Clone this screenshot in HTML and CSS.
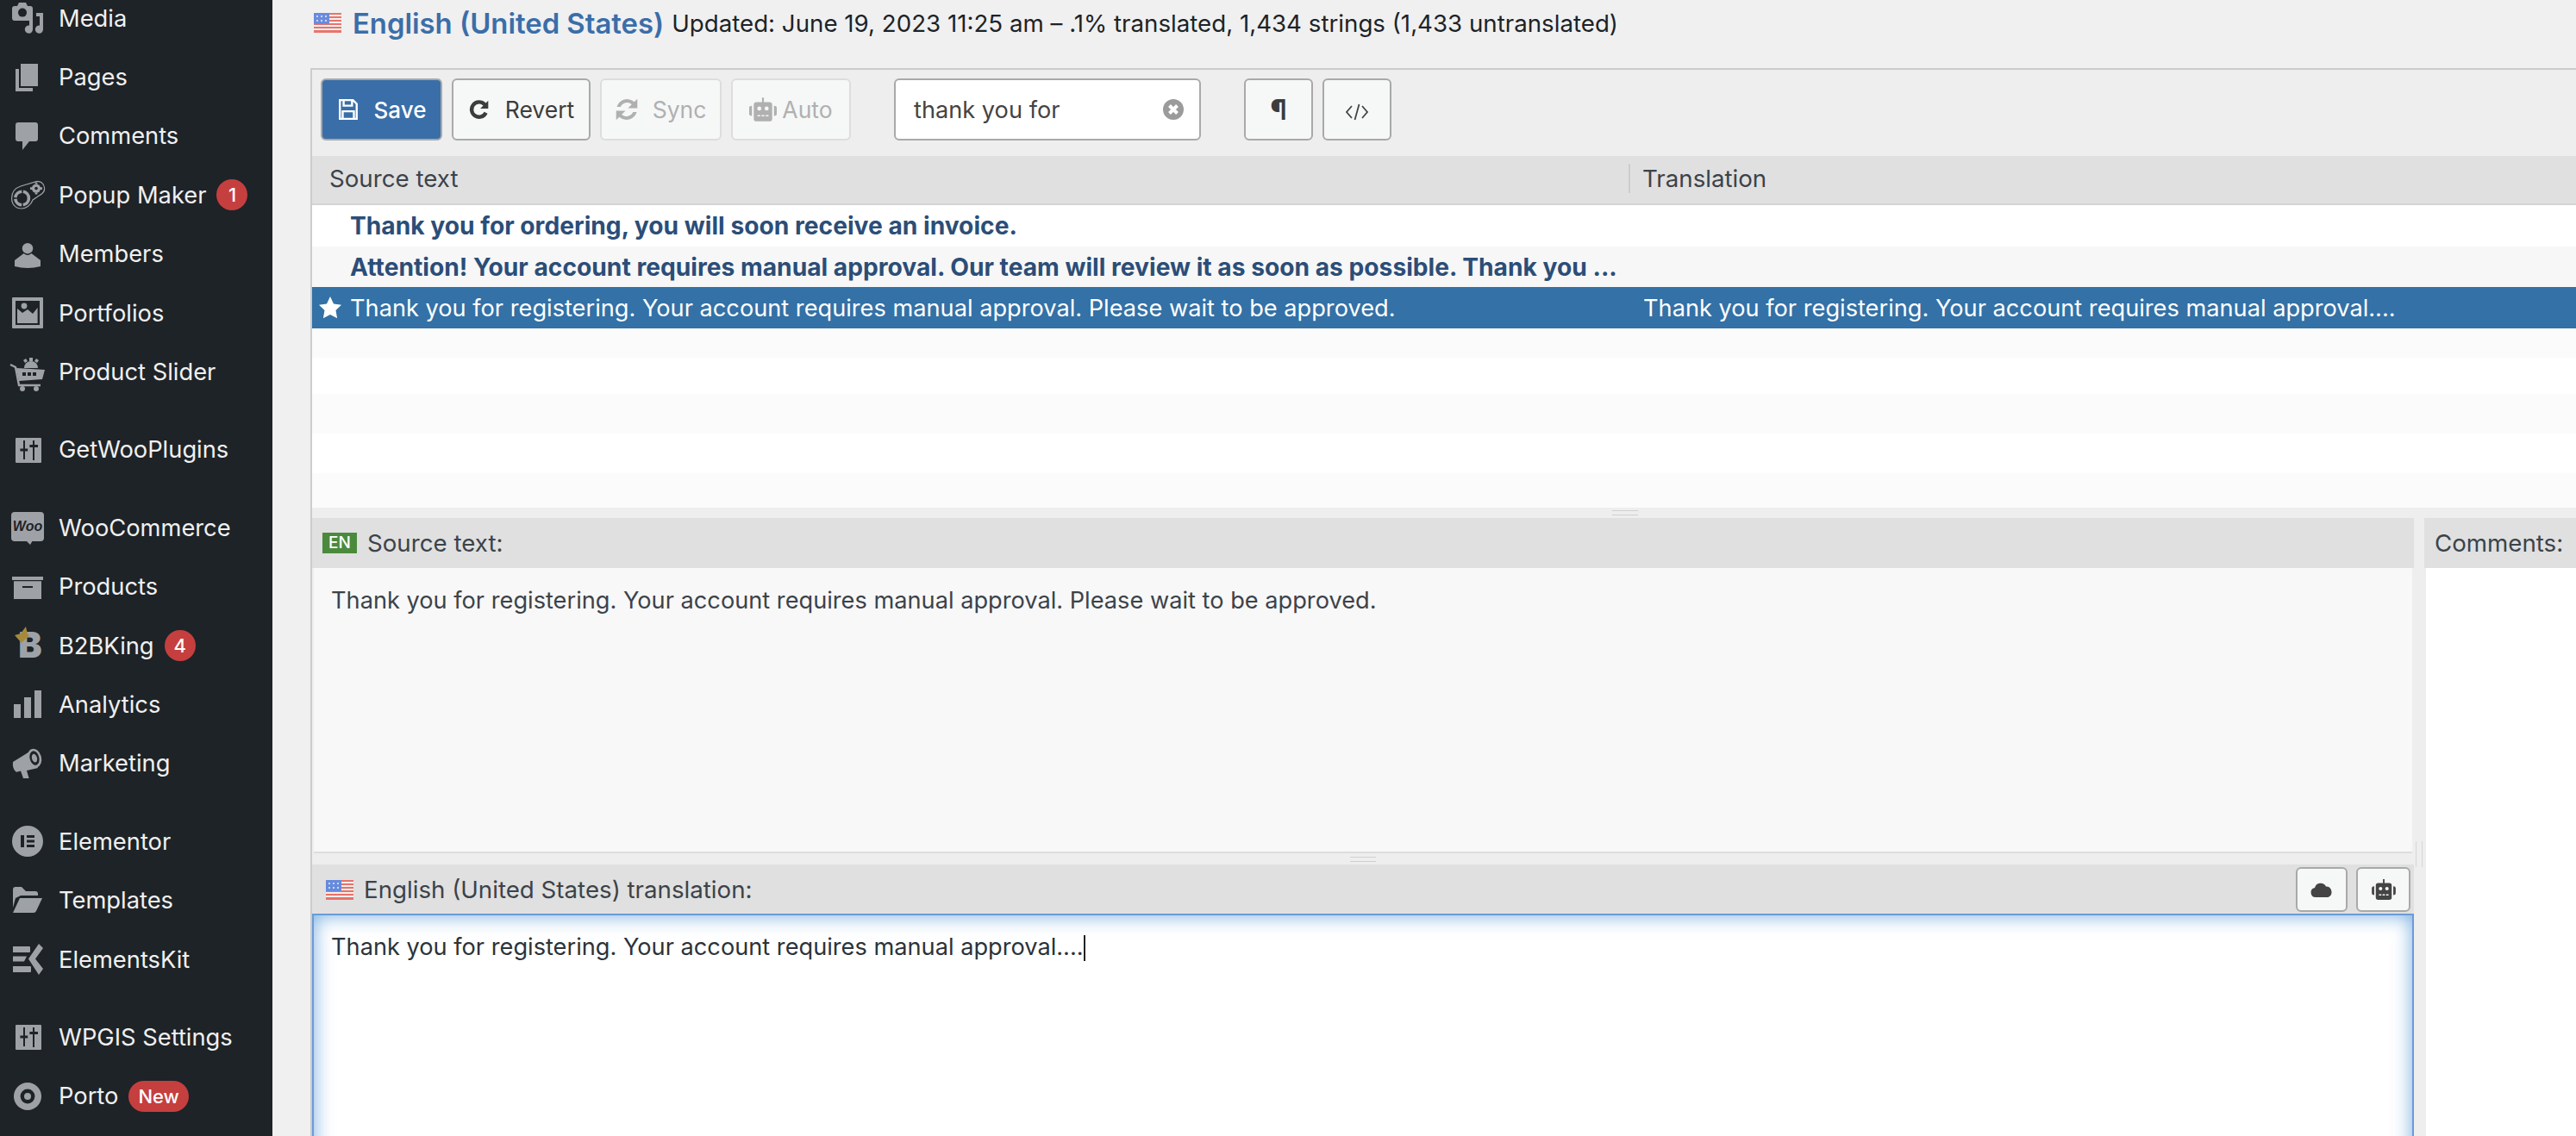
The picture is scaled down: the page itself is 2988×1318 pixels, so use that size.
FILE: index.html
```html
<!DOCTYPE html>
<html lang="en">
<head>
<meta charset="utf-8">
<title>Loco Translate editor</title>
<link rel="stylesheet" href="styles.css">
</head>
<body>
<aside class="sidebar">
  <ul class="menu">
    <li class="item"><svg class="ic" viewBox="0 0 20 20"><path d="M1 4.500Q1 3 2.500 3H4l1-2h4l1 2h1.500Q13 3 13 4.500V10q0 1.500-1.500 1.500h-9Q1 11.500 1 10z"/><circle class="cut" cx="7" cy="6.800" r="2.500"/><path d="M15 7h4v9.500a2.300 2.300 0 1 1-2-2.200V9h-2z"/><path d="M12 10.500h1V16.500a2.300 2.300 0 1 1-2-2.200V11z"/></svg><span>Media</span></li>
    <li class="item"><svg class="ic" viewBox="0 0 20 20"><path d="M6 2h10v13H6z"/><path d="M3 5h2v11h8v2H3z"/></svg><span>Pages</span></li>
    <li class="item"><svg class="ic" viewBox="0 0 20 20"><path d="M4.500 2h10Q16 2 16 3.500v8Q16 13 14.500 13H11l-4 5v-5H4.500Q3 13 3 11.500v-8Q3 2 4.500 2z"/></svg><span>Comments</span></li>
    <li class="item"><svg class="ic" viewBox="0 0 20 20"><path class="ln" d="M.8 12C.8 8 3 6 6 5L15 2.300C17.500 1.800 19.500 3.500 19.800 6 20 8 18.500 9.500 17 10.300L13 13C12 16 9 18 6.500 18 3 18 .8 15.500.8 12z"/><circle class="ln2" cx="6.800" cy="12" r="3.900" stroke-dasharray="5.500 .8"/><circle cx="15" cy="6.300" r="2.600"/><circle class="cut" cx="15" cy="6.300" r=".9"/><path d="M14.300 2.800h1.400v1h-1.400zM14.300 8.800h1.400v1h-1.400zM11.500 5.600h1v1.400h-1zM17.500 5.600h1v1.400h-1z"/></svg><span>Popup Maker</span><b class="badge">1</b></li>
    <li class="item"><svg class="ic" viewBox="0 0 20 20"><circle cx="10" cy="6.600" r="3.100"/><path d="M7.800 9.500 2.500 13.500V17q7.500 2 15 0v-3.500l-5.300-4q-2.200 2-4.400 0z"/></svg><span>Members</span></li>
    <li class="item"><svg class="ic" viewBox="0 0 20 20"><path fill-rule="evenodd" d="M1.500 1h17q.5 0 .5.500v17q0 .5-.5.500h-17q-.5 0-.5-.5v-17q0-.5.500-.5zM3 3v14h14V3z"/><path d="M4 7.500l3 2.500 3-2 3 2.500 2.800-3.500V16H4z"/><circle cx="8" cy="6" r="1.700"/></svg><span>Portfolios</span></li>
    <li class="item"><svg class="ic" viewBox="0 0 20 20"><path class="ln3" d="M0 5.500 3 7l2 10.500h12.500"/><path d="M3.500 7.500 20 8.500 18.500 14 5 15z"/><path class="cut" d="M7 10h2v2H7zM10 10h2v2h-2zM13 10h2v2h-2z"/><path d="M8 7.500a3.800 3.800 0 0 1 8 0z"/><path d="M11 1.500h2v2h-2zM7.500 3l1.500-1 1 1.500-1.500 1zM15 2l1.500 1-1 1.500L14 3.500z"/><circle cx="7" cy="19.500" r="1.500"/><circle cx="15" cy="19.500" r="1.500"/></svg><span>Product Slider</span></li>
    <li class="item sep"><svg class="ic" viewBox="0 0 20 20"><path d="M3.500 3h14q.5 0 .5.500v13.500q0 .5-.5.500h-14q-.5 0-.5-.5V3.500q0-.5.500-.5z"/><path class="cut" d="M7.500 4.500h1v4.800h1.600v1.500H8.500v4.700h-1v-4.700H5.700V9.300h1.800zM13 4.500h1v2.500h2v1.500h-2v7.500h-1V8.500h-1.800V7H13z"/></svg><span>GetWooPlugins</span></li>
    <li class="item sep"><svg class="ic" viewBox="0 0 20 20"><rect x=".5" y="1" width="19" height="17" rx="2"/><path d="M9 17.500h4l-1.500 2.500z"/><text class="woo" x="10" y="12" text-anchor="middle">Woo</text></svg><span>WooCommerce</span></li>
    <li class="item"><svg class="ic" viewBox="0 0 20 20"><path d="M1 4h18v2H1z"/><path fill-rule="evenodd" d="M2 6.600h16V17H2zM7 9.500v1h6v-1z"/></svg><span>Products</span></li>
    <li class="item"><svg class="ic" viewBox="0 0 20 20"><text class="bee" x="11.500" y="17" text-anchor="middle">B</text><path class="crown" d="M2.500 4 6 3 9-1l1 4.500 1 .5-4.500 4.500z"/></svg><span>B2BKing</span><b class="badge">4</b></li>
    <li class="item"><svg class="ic" viewBox="0 0 20 20"><path d="M2 10h4v8H2zM8 6h4v12H8zM14 2h4v16h-4z"/></svg><span>Analytics</span></li>
    <li class="item"><svg class="ic" viewBox="0 0 20 20"><path d="M1.500 9 12 2.500l4 10-6.500 1.500 1.300 4.500H7.500L6 14.300l-2.500.6Q1 13 1.500 9z"/><ellipse cx="14" cy="6.800" rx="4" ry="5.500" transform="rotate(-15 14 6.800)"/><ellipse class="cut" cx="14" cy="6.800" rx="2.700" ry="4.200" transform="rotate(-15 14 6.800)"/><ellipse cx="14" cy="6.800" rx="1.500" ry="2.500" transform="rotate(-15 14 6.800)"/></svg><span>Marketing</span></li>
    <li class="item sep"><svg class="ic" viewBox="0 0 20 20"><circle cx="10" cy="10" r="9"/><path class="cut" d="M6 6.500h2v7H6zM9.500 6.500H14v1.500H9.500zM9.500 9.300H14v1.500H9.500zM9.500 12H14v1.500H9.500z"/></svg><span>Elementor</span></li>
    <li class="item"><svg class="ic" viewBox="0 0 20 20"><path d="M1.500 14V3.500Q1.500 2 3 2h3.500L9 4.500h5.500Q16 4.500 16 6v1H6L3 8.500z"/><path d="M1.500 17 5.500 8.500H18.500L15 16q-.5 1-1.500 1z"/></svg><span>Templates</span></li>
    <li class="item"><svg class="ic" viewBox="0 0 20 20"><path d="M1.500 2.500h9.500q.5 0 .5.500v2.500q0 .5-.5.500H1.500zM1.500 8.300h8l-1.500 3H1.500zM1.500 14h10q.5 0 .5.500v2.500q0 .5-.5.500H1.500z"/><path d="M16.500 1 19 3.500 14.500 9.800 19 15.500 16.500 19 10.500 9.800z"/></svg><span>ElementsKit</span></li>
    <li class="item sep"><svg class="ic" viewBox="0 0 20 20"><path d="M3.500 3h14q.5 0 .5.500v13.500q0 .5-.5.500h-14q-.5 0-.5-.5V3.500q0-.5.500-.5z"/><path class="cut" d="M7.500 4.500h1v4.800h1.600v1.500H8.500v4.700h-1v-4.700H5.700V9.300h1.800zM13 4.500h1v2.500h2v1.500h-2v7.500h-1V8.500h-1.800V7H13z"/></svg><span>WPGIS Settings</span></li>
    <li class="item"><svg class="ic" viewBox="0 0 20 20"><circle cx="10" cy="10" r="8"/><circle class="cut" cx="10" cy="10" r="4.200"/><circle cx="10" cy="10" r="2"/></svg><span>Porto</span><b class="badge pill">New</b></li>
  </ul>
</aside>

<main class="main">
  <header class="title-row">
    <svg class="flag" viewBox="0 0 32 23"><rect width="32" height="23" fill="#f4f0ee"/><path fill="#e8675f" d="M0 0h32v2H0zM0 4h32v2H0zM0 8h32v2H0zM0 12h32v2H0zM0 16h32v2H0zM0 20h32v3H0z"/><rect width="18" height="13" fill="#5b82dc"/><path fill="#c6d6f5" d="M3 3h2v2H3zM8 3h2v2H8zM13 3h2v2h-2zM3 8h2v2H3zM8 8h2v2H8zM13 8h2v2h-2z"/></svg>
    <h1 class="locale">English (United States)</h1>
    <span class="meta">Updated: June 19, 2023 11:25 am – .1% translated, 1,434 strings (1,433 untranslated)</span>
  </header>

  <section class="panel">
    <div class="toolbar">
      <button class="btn primary"><svg class="bi" viewBox="0 0 24 24"><path class="o" d="M3 2h14l4 4v16H3zM7 2v6h9V2M6 22v-8h12v8"/></svg>Save</button>
      <button class="btn wide"><svg class="bi" viewBox="0 0 24 24"><path class="o thick" d="M19 15.500A8 8 0 1 1 17.500 6.500L20 9"/><path class="s" d="M21.500 2.500V11h-8.500z"/></svg>Revert</button>
      <button class="btn off"><svg class="bi" viewBox="3 3 18 18"><path class="s" d="M4 10a8.500 8.500 0 0 1 14-4l2.500-2.500V11H13l3-3a5.500 5.500 0 0 0-9 2zM20 14a8.500 8.500 0 0 1-14 4l-2.500 2.500V13H11l-3 3a5.500 5.500 0 0 0 9-2z"/></svg>Sync</button>
      <button class="btn off tight"><svg class="bi robot" viewBox="0 0 30 26"><path class="s" d="M14 0h2v5h6q3 0 3 3v15q0 3-3 3H8q-3 0-3-3V8q0-3 3-3h6zM0 11q0-2 3-2v11q-3 0-3-2zM30 11q0-2-3-2v11q3 0 3-2z"/><circle class="hole" cx="11" cy="12" r="2.200"/><circle class="hole" cx="19" cy="12" r="2.200"/><path class="hole" d="M9 19h3v1.500H9zM13.500 19h3v1.500h-3zM18 19h3v1.500h-3z"/></svg>Auto</button>
      <div class="search"><span>thank you for</span><svg class="clear" viewBox="0 0 24 24"><circle cx="12" cy="12" r="12" fill="#9b9b9b"/><path d="M7.500 7.500l9 9M16.500 7.500l-9 9" stroke="#fff" stroke-width="4"/></svg></div>
      <button class="btn square pil">¶</button>
      <button class="btn square"><svg class="code" viewBox="0 0 28 20"><path d="M8 3 2 10l6 7M20 3l6 7-6 7M16.500 1l-5 18" fill="none" stroke="#444" stroke-width="1.800"/></svg></button>
    </div>

    <div class="list-head">
      <div class="col-a">Source text</div>
      <div class="col-b">Translation</div>
    </div>
    <div class="rows">
      <div class="row"><div class="col-a strong"><i class="mark"></i>Thank you for ordering, you will soon receive an invoice.</div></div>
      <div class="row alt"><div class="col-a strong"><i class="mark"></i>Attention! Your account requires manual approval. Our team will review it as soon as possible. Thank you ...</div></div>
      <div class="row sel"><div class="col-a"><i class="mark"><svg class="star" viewBox="0 0 26 26"><path d="M13 0l4 8.500 9 1.200-6.500 6.300 1.600 9.300L13 21l-8.100 4.300L6.500 16 0 9.700l9-1.200z"/></svg></i>Thank you for registering. Your account requires manual approval. Please wait to be approved.</div><div class="col-b">Thank you for registering. Your account requires manual approval....</div></div>
      <div class="row empty tint first"></div>
      <div class="row empty second"></div>
      <div class="row empty tint"></div>
      <div class="row empty"></div>
      <div class="row empty tint"></div>
    </div>
    <div class="hsplit grip-right"><i class="grip"></i></div>

    <div class="panes">
      <div class="pane-main">
        <div class="pane-head"><b class="lang">EN</b><span>Source text:</span></div>
        <div class="source">Thank you for registering. Your account requires manual approval. Please wait to be approved.</div>
        <div class="hsplit short"><i class="grip"></i></div>
        <div class="pane-head target-head">
          <svg class="flag small" viewBox="0 0 32 23"><rect width="32" height="23" fill="#f4f0ee"/><path fill="#e8675f" d="M0 0h32v2H0zM0 4h32v2H0zM0 8h32v2H0zM0 12h32v2H0zM0 16h32v2H0zM0 20h32v3H0z"/><rect width="18" height="13" fill="#5b82dc"/><path fill="#c6d6f5" d="M3 3h2v2H3zM8 3h2v2H8zM13 3h2v2h-2zM3 8h2v2H3zM8 8h2v2H8zM13 8h2v2h-2z"/></svg>
          <span>English (United States) translation:</span>
          <div class="head-tools">
            <button class="btn mini"><svg class="bi" viewBox="0 0 26 20"><path class="s" d="M6 19a5.500 5.500 0 0 1-1-10.900A7 7 0 0 1 18 6.500 6.500 6.500 0 0 1 20.500 19z"/></svg></button>
            <button class="btn mini wider"><svg class="bi robot" viewBox="0 0 30 26"><path class="s" d="M14 0h2v5h6q3 0 3 3v15q0 3-3 3H8q-3 0-3-3V8q0-3 3-3h6zM0 11q0-2 3-2v11q-3 0-3-2zM30 11q0-2-3-2v11q3 0 3-2z"/><circle class="hole light" cx="11" cy="12" r="2.200"/><circle class="hole light" cx="19" cy="12" r="2.200"/><path class="hole light" d="M9 19h3v1.500H9zM13.500 19h3v1.500h-3zM18 19h3v1.500h-3z"/></svg></button>
          </div>
        </div>
        <div class="target">Thank you for registering. Your account requires manual approval....<i class="caret"></i></div>
      </div>
      <div class="vsplit"><i class="vgrip"></i></div>
      <div class="pane-side">
        <div class="pane-head side-head"><span>Comments:</span></div>
        <div class="comments"></div>
      </div>
    </div>
  </section>
</main>
</body>
</html>
```

FILE: styles.css
```css
* { box-sizing: border-box; }
html, body { margin: 0; height: 1318px; overflow: hidden; }
body {
  display: flex;
  background: #f0f0f1;
  font-family: Inter, "Liberation Sans", sans-serif;
  font-size: 27.2px;
  color: #3c434a;
}
.sidebar { width: 316px; flex: none; height: 1318px; background: #1e2327; overflow: hidden; }
.menu { list-style: none; margin: -13px 0 0; padding: 0; }
.item {
  height: 68.4px;
  display: flex;
  align-items: center;
  padding-left: 12px;
  color: #f0f0f1;
  font-size: 27.3px;
  white-space: nowrap;
}
.item.sep { margin-top: 22px; }
.ic { width: 40px; height: 40px; flex: none; margin-right: 16px; fill: #9ea2a7; overflow: visible; }
.ic .cut { fill: #1e2327; }
.ic .ln { fill: none; stroke: #9ea2a7; stroke-width: .6; }
.ic .ln2 { fill: none; stroke: #9ea2a7; stroke-width: 1.800; }
.ic .ln3 { fill: none; stroke: #9ea2a7; stroke-width: 1.2; }
.ic .woo { font: italic 800 8px "Liberation Sans", sans-serif; fill: #1e2327; }
.ic .bee { font: 900 20.5px Inter, "Liberation Sans", sans-serif; fill: #9ea2a7; }
.ic .crown { fill: #a68a3c; }
.badge {
  margin-left: 12px;
  min-width: 36px;
  height: 36px;
  border-radius: 18px;
  background: #c53f3f;
  color: #fff;
  font-size: 22px;
  font-weight: 500;
  line-height: 36px;
  text-align: center;
}
.badge.pill { padding: 0 11px; }

.main { flex: 1; min-width: 0; padding-left: 44px; }
.title-row { height: 79px; display: flex; align-items: center; padding: 0 0 26px 4px; white-space: nowrap; }
.flag { width: 32px; height: 23px; flex: none; opacity: .9; }
.locale { margin: 0 9px 0 13px; font-size: 32.8px; font-weight: 600; color: #3b6ea8; }
.meta { color: #1d2327; font-size: 27.7px; }

.panel { height: 1239px; background: #eee; border: solid #ccc; border-width: 2px 0 0 2px; overflow: hidden; }
.toolbar { height: 100px; display: flex; align-items: flex-start; padding: 10px 0 0 10px; }
.btn {
  height: 72px;
  padding: 0 18px;
  display: flex;
  align-items: center;
  justify-content: center;
  gap: 17px;
  margin-right: 11px;
  background: #f6f7f7;
  border: 2px solid #a9a9a9;
  border-radius: 6px;
  color: #3c3c3c;
  font: 400 26.5px Inter, "Liberation Sans", sans-serif;
}
.btn.primary { width: 141px; background: #3a6ea8; color: #fff; font-weight: 500; font-size: 26px; }
.btn.wide { width: 161px; }
.btn.off { width: 141px; border-color: #ddd; color: #b0b0b0; }
.btn.tight { width: 139px; gap: 6px; padding: 0; }
.btn.square { width: 80px; padding: 0; }
.btn.pil { margin-left: 50px; font-size: 32px; font-weight: 700; }
.bi { width: 26px; height: 26px; flex: none; }
.bi .o { fill: none; stroke: currentColor; stroke-width: 2.2; }
.bi .o.thick { stroke-width: 4; }
.bi .s { fill: currentColor; }
.bi .hole { fill: #f6f7f7; }
.bi.robot { width: 32px; height: 28px; }
.search {
  width: 356px;
  height: 72px;
  margin-left: 39px;
  padding: 0 18px 0 21px;
  display: flex;
  align-items: center;
  justify-content: space-between;
  background: #fff;
  border: 2px solid #a9a9a9;
  border-radius: 6px;
  color: #444;
}
.clear { width: 24px; height: 24px; }
.code { width: 28px; height: 20px; margin-top: 6px; }

.list-head { height: 57px; display: flex; align-items: center; padding-bottom: 4px; background: #e0e0e0; border-bottom: 2px solid #d4d4d4; font-size: 27.7px; }
.list-head .col-a { width: 1529px; padding-left: 20px; border-right: 2px solid #ccc; }
.list-head .col-b { padding-left: 14px; }
.rows { height: 351px; overflow: hidden; }
.row { height: 47.7px; display: flex; align-items: center; background: #fff; white-space: nowrap; }
.row.alt { background: #f7f7f7; }
.row.sel { background: #3371a6; color: #fff; }
.row.empty { height: 46px; }
.row.empty.first { height: 34px; }
.row.empty.second { height: 42px; }
.row.tint { background: #fbfbfb; }
.row .col-a { width: 1544px; display: flex; align-items: center; }
.strong { color: #2b4e78; font-weight: 700; font-size: 28.2px; }
.mark { width: 44px; flex: none; display: flex; padding-left: 8px; font-style: normal; }
.star { width: 26px; height: 26px; fill: #fff; }

.hsplit { height: 12px; display: flex; justify-content: center; align-items: center; background: #eee; }
.grip { width: 30px; height: 6px; border: solid #d0d0d0; border-width: 1px 0; }
.grip-right { padding-left: 420px; }
.short { height: 13px; }

.panes { display: flex; align-items: flex-start; }
.pane-main { width: 2438px; flex: none; }
.pane-head { height: 58px; display: flex; align-items: center; background: #e0e0e0; padding-left: 12px; gap: 12px; font-size: 27.7px; }
.lang { width: 40px; height: 24px; background: #4a8a3c; color: #fff; font-size: 19px; font-weight: 500; line-height: 24px; text-align: center; }
.source { height: 331px; margin: 0 2px; padding: 21px 20px; background: #f8f8f8; border-bottom: 2px solid #ddd; }
.target-head { height: 57px; padding-left: 16px; }
.flag.small { margin-top: 1px; }
.head-tools { margin-left: auto; display: flex; padding-right: 4px; }
.btn.mini { width: 60px; height: 52px; padding: 0; margin: 0 0 0 10px; }
.btn.mini.wider { width: 63px; }
.mini .bi { color: #444; }
.mini .bi.robot { width: 28px; height: 24px; }
.hole.light { fill: #f6f7f7; }
.target {
  height: 300px;
  padding: 20px 20px;
  color: #2c3338;
  background: #fff;
  border: 2px solid #6a9bd8;
  box-shadow: inset 0 0 22px rgba(80, 150, 215, .8);
}
.caret { display: inline-block; width: 2px; height: 30px; background: #222; vertical-align: -7px; }
.vsplit { width: 12px; flex: none; height: 717px; padding: 375px 2px 0; }
.vgrip { display: block; width: 8px; height: 30px; border: solid #d6d6d6; border-width: 0 1px; }
.pane-side { flex: 1; min-width: 0; }
.side-head { padding-left: 12px; }
.comments { height: 660px; margin-left: 2px; background: #fff; }
```
